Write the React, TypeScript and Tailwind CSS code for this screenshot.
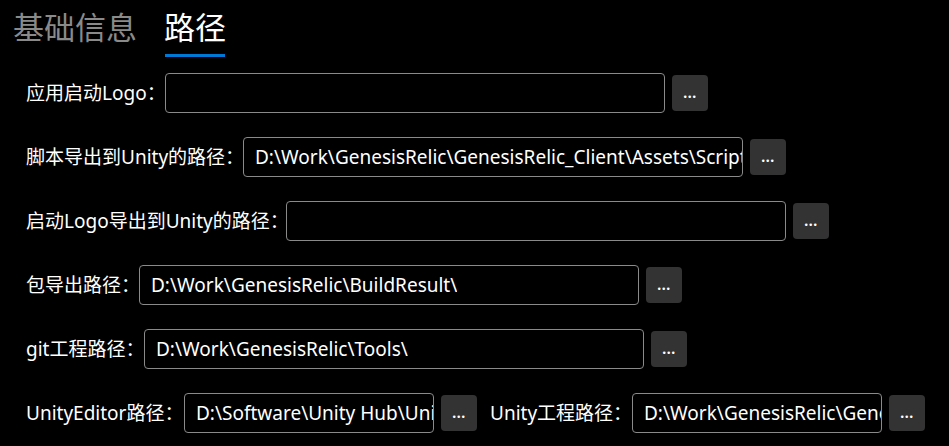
import React from "react";

type PathField = {
  label: string;
  labelWidth: string;
  value: string;
  inputWidth: string;
};

const FONT = "font-['Noto_Sans','Noto_Sans_CJK_SC',sans-serif]";

function BrowseButton() {
  return (
    <button className="ml-[7px] flex h-9 w-9 shrink-0 items-center justify-center rounded-[4px] bg-[#333333] text-[14px] font-bold leading-none text-white">
      <span className="tracking-[0.5px]">...</span>
    </button>
  );
}

function Field({ label, labelWidth, value, inputWidth }: PathField) {
  return (
    <div className="flex h-10 items-center">
      <span className={`${labelWidth} shrink-0 whitespace-nowrap text-[19px] text-white`}>
        {label}
      </span>
      <div
        className={`${inputWidth} flex h-10 shrink-0 items-center overflow-hidden rounded-[4px] border border-[#8a8a8a] bg-black pl-[11px]`}
      >
        <span className="overflow-hidden whitespace-nowrap text-[19px] text-white">{value}</span>
      </div>
      <BrowseButton />
    </div>
  );
}

export default function App() {
  const rows: PathField[] = [
    { label: "应用启动Logo：", labelWidth: "w-[139px]", value: "", inputWidth: "w-[500px]" },
    {
      label: "脚本导出到Unity的路径：",
      labelWidth: "w-[217px]",
      value: "D:\\Work\\GenesisRelic\\GenesisRelic_Client\\Assets\\Scripts\\",
      inputWidth: "w-[500px]",
    },
    { label: "启动Logo导出到Unity的路径：", labelWidth: "w-[260px]", value: "", inputWidth: "w-[500px]" },
    {
      label: "包导出路径：",
      labelWidth: "w-[113px]",
      value: "D:\\Work\\GenesisRelic\\BuildResult\\",
      inputWidth: "w-[500px]",
    },
    {
      label: "git工程路径：",
      labelWidth: "w-[118px]",
      value: "D:\\Work\\GenesisRelic\\Tools\\",
      inputWidth: "w-[500px]",
    },
  ];

  return (
    <div className={`min-h-screen w-full overflow-hidden bg-black ${FONT}`}>
      {/* tab header */}
      <div className="flex gap-[27px] pl-[13px] pt-[12px]">
        <div className="flex flex-col">
          <span className="text-[31px] leading-[30px] text-[#8a8a8a]">基础信息</span>
        </div>
        <div className="flex flex-col items-start">
          <span className="text-[31px] leading-[30px] text-white">路径</span>
          <div className="ml-[1px] mt-[12px] h-[3px] w-[60px] bg-[#0078d7]" />
        </div>
      </div>

      <div className="mt-4 flex flex-col gap-6 pl-[26px]">
        {rows.map((r) => (
          <Field key={r.label} {...r} />
        ))}
        <div className="flex h-10 items-center">
          <Field
            label="UnityEditor路径："
            labelWidth="w-[158px]"
            value="D:\Software\Unity Hub\Unity\Editor\"
            inputWidth="w-[250px]"
          />
          <div className="ml-[13px]">
            <Field
              label="Unity工程路径："
              labelWidth="w-[142px]"
              value="D:\Work\GenesisRelic\GenesisRelic_Client\"
              inputWidth="w-[250px]"
            />
          </div>
        </div>
      </div>
    </div>
  );
}
